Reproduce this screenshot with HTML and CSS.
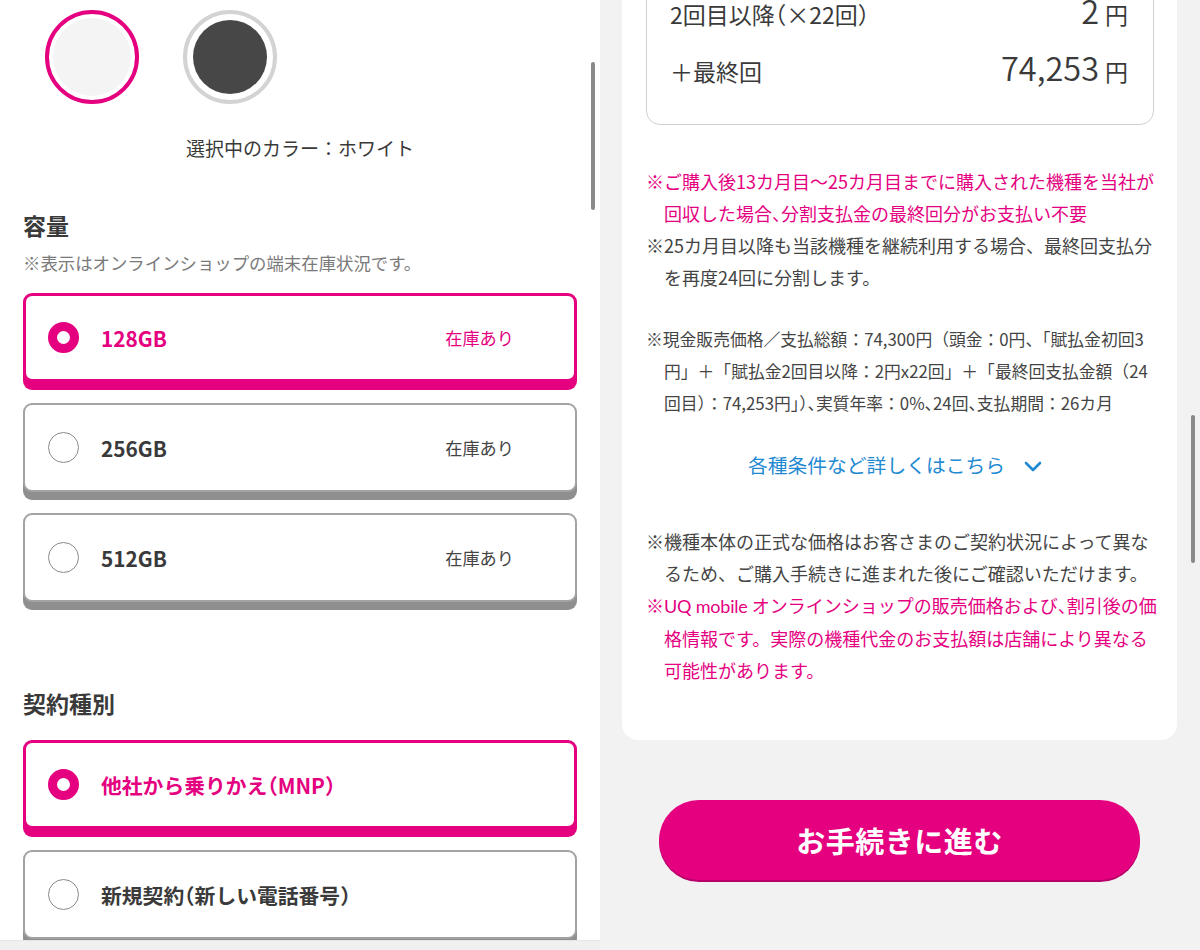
FILE: index.html
```html
<!DOCTYPE html>
<html lang="ja">
<head>
<meta charset="utf-8">
<title>UQ mobile</title>
<link rel="stylesheet" href="styles.css">
</head>
<body>
<div class="screen">
  <section class="pane left">
    <div class="viewport">
      <div class="swatches">
        <span class="swatch swatch-white"><span class="swatch-fill"></span></span>
        <span class="swatch swatch-dark"><span class="swatch-fill"></span></span>
      </div>
      <p class="color-label">選択中のカラー：ホワイト</p>

      <h2 class="heading">容量</h2>
      <p class="sub">※表示はオンラインショップの端末在庫状況です。</p>
      <div class="options">
        <div class="option is-selected"><span class="radio"></span><span class="opt-label">128GB</span><span class="stock">在庫あり</span></div>
        <div class="option"><span class="radio"></span><span class="opt-label">256GB</span><span class="stock">在庫あり</span></div>
        <div class="option"><span class="radio"></span><span class="opt-label">512GB</span><span class="stock">在庫あり</span></div>
      </div>

      <h2 class="heading heading-contract">契約種別</h2>
      <div class="options options-contract">
        <div class="option is-selected"><span class="radio"></span><span class="opt-label">他社から乗りかえ<span class="half">（</span>MNP<span class="half">）</span></span></div>
        <div class="option"><span class="radio"></span><span class="opt-label">新規契約<span class="half">（</span>新しい電話番号）</span></div>
      </div>
    </div>
    <div class="bottom-bar"></div>
    <div class="scrollbar scrollbar-left"></div>
  </section>

  <section class="pane right">
    <div class="card">
      <div class="price-box">
        <div class="price-row">
          <span class="price-label">2回目以降<span class="half">（</span>×22回）</span>
          <span class="amount"><span class="num">2</span><span class="yen">円</span></span>
        </div>
        <div class="price-row">
          <span class="price-label">＋最終回</span>
          <span class="amount"><span class="num">74,253</span><span class="yen">円</span></span>
        </div>
      </div>

      <div class="notes notes-first">
        <p class="note pink">※ご購入後13カ月目〜25カ月目までに購入された機種を当社が<br>回収した場合<span class="half">、</span>分割支払金の最終回分がお支払い不要</p>
        <p class="note">※25カ月目以降も当該機種を継続利用する場合、最終回支払分<br>を再度24回に分割します。</p>
      </div>

      <p class="note note-small">※現金販売価格／支払総額：74,300円（頭金：0円、「賦払金初回3<br>円」＋「賦払金2回目以降：2円x22回」＋「最終回支払金額（24<br>回目）：74,253円」<span class="half">）、</span>実質年率：0%<span class="half">、</span>24回<span class="half">、</span>支払期間：26カ月</p>

      <p class="more">各種条件など詳しくはこちら<svg class="chev" width="18" height="13" viewBox="0 0 18 13"><path d="M2 3 L9 10 L16 3" fill="none" stroke="#1f8ad2" stroke-width="2.6" stroke-linecap="round" stroke-linejoin="round"/></svg></p>

      <div class="notes notes-last">
        <p class="note">※機種本体の正式な価格はお客さまのご契約状況によって異な<br>るため、ご購入手続きに進まれた後にご確認いただけます。</p>
        <p class="note pink">※<span class="latin">UQ mobile</span> オンラインショップの販売価格および<span class="half">、</span>割引後の価<br>格情報です。実際の機種代金のお支払額は店舗により異なる<br>可能性があります。</p>
      </div>
    </div>

    <div class="btn">お手続きに進む</div>
    <div class="scrollbar scrollbar-right"></div>
  </section>
</div>
</body>
</html>
```

FILE: styles.css
```css
* { box-sizing: border-box; }

html, body {
  margin: 0;
  padding: 0;
}

body {
  width: 1200px;
  height: 950px;
  overflow: hidden;
  font-family: "Noto Sans CJK JP", "Noto Sans", sans-serif;
  color: #333;
  background: #fff;
}

p, h2 { margin: 0; }

.screen {
  display: flex;
  width: 1200px;
  height: 950px;
}

.pane {
  position: relative;
  width: 600px;
  height: 950px;
  overflow: hidden;
}

/* ---------- left ---------- */
.left {
  background: #fff;
  display: flex;
  flex-direction: column;
}

.viewport {
  height: 940px;
  overflow: hidden;
  padding: 10px 23px 0 23px;
}

.bottom-bar {
  height: 10px;
  background: #f0f0f0;
  border-top: 1px solid #e6e6e6;
}

.swatches {
  display: flex;
  gap: 44px;
  padding-left: 22px;
}

.swatch {
  width: 94px;
  height: 94px;
  border-radius: 50%;
  display: block;
}

.swatch-white {
  border: 4px solid #e4007f;
  padding: 4px;
}

.swatch-white .swatch-fill { background: #f4f4f4; }

.swatch-dark {
  border: 4px solid #d3d3d3;
  padding: 6px;
}

.swatch-dark .swatch-fill { background: #474747; }

.swatch-fill {
  display: block;
  width: 100%;
  height: 100%;
  border-radius: 50%;
}

.color-label {
  margin-top: 29px;
  line-height: 30px;
  font-size: 19px;
  text-align: center;
  color: #3a3a3a;
}

.heading {
  margin-top: 46px;
  font-size: 23px;
  line-height: 32px;
  font-weight: 700;
  color: #3a3a3a;
}

.sub {
  margin-top: 9px;
  font-size: 17.4px;
  line-height: 26px;
  color: #7a7a7a;
}

.options {
  margin-top: 17px;
  display: flex;
  flex-direction: column;
  gap: 21px;
}

.option {
  height: 89px;
  border: 2px solid #a3a3a3;
  border-radius: 9px;
  box-shadow: 0 8px 0 #8f8f8f;
  background: #fff;
  display: flex;
  align-items: center;
  padding-left: 23px;
  padding-right: 61px;
}

.option.is-selected {
  border: 3px solid #e4007f;
  box-shadow: 0 8px 0 #e4007f;
  padding-left: 22px;
  padding-right: 60px;
}

.radio {
  width: 31px;
  height: 31px;
  border-radius: 50%;
  border: 1.5px solid #8a8a8a;
  background: #fff;
  flex: none;
}

.is-selected .radio {
  border: 9.5px solid #e4007f;
}

.opt-label {
  margin-left: 22px;
  font-size: 20.8px;
  font-weight: 700;
  color: #3a3a3a;
}

.is-selected .opt-label,
.is-selected .stock {
  color: #e4007f;
}

.stock {
  margin-left: auto;
  font-size: 17.2px;
  color: #444;
}

.heading-contract { margin-top: 85px; }

.options-contract { margin-top: 21px; }

.scrollbar {
  position: absolute;
  width: 4px;
  border-radius: 2px;
  background: #8a8a8a;
}

.scrollbar-left {
  left: 591px;
  top: 62px;
  height: 148px;
}

/* ---------- right ---------- */
.right {
  background: #f2f2f2;
  padding: 0 23px 0 22px;
}

.card {
  background: #fff;
  border-radius: 0 0 16px 16px;
  padding: 0 23px 54px 24px;
}

.price-box {
  margin-top: -15px;
  border: 1px solid #cfcfcf;
  border-radius: 14px;
  padding: 0 25px 24px 23px;
}

.price-row {
  height: 57px;
  display: flex;
  align-items: baseline;
  justify-content: space-between;
}

.price-label {
  font-size: 23px;
  line-height: 57px;
  color: #3a3a3a;
}

.amount {
  display: flex;
  align-items: baseline;
  color: #3a3a3a;
  line-height: 1;
}

.num {
  font-size: 32.5px;
  font-weight: 350;
  line-height: 1;
}

.yen {
  font-size: 23px;
  margin-left: 6px;
  line-height: 1;
}

.notes-first { margin-top: 40px; }

.note {
  font-size: 18px;
  line-height: 32px;
  padding-left: 18px;
  text-indent: -18px;
  white-space: nowrap;
  color: #444;
}

.note.pink { color: #e4007f; }

.half { font-feature-settings: "halt"; }

.latin {
  font-family: "Lato", "Noto Sans", sans-serif;
  letter-spacing: -0.2px;
}

.note-small {
  margin-top: 30px;
  font-size: 16.8px;
}

.more {
  margin-top: 30px;
  text-align: center;
  font-size: 19.8px;
  line-height: 32px;
  color: #1f8ad2;
  padding-right: 10px;
}

.chev {
  margin-left: 19px;
  vertical-align: 0px;
}

.notes-last { margin-top: 44px; }

.btn {
  margin: 60px auto 0;
  width: 481px;
  height: 80px;
  border-radius: 40px;
  background: #e4007f;
  box-shadow: 0 2px 0 #b8006a;
  color: #fff;
  font-size: 29px;
  font-weight: 700;
  display: flex;
  align-items: center;
  justify-content: center;
  letter-spacing: 0.5px;
}

.scrollbar-right {
  left: 591px;
  top: 415px;
  height: 148px;
}
```
